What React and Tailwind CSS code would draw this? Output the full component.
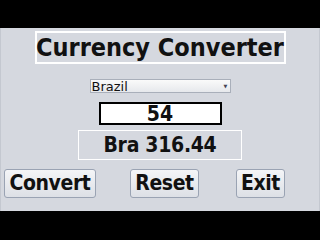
import { useState } from 'react'

const font = { fontFamily: '"DejaVu Sans Condensed", Tahoma, "DejaVu Sans", sans-serif' }

function Btn({ children, className, onClick }) {
  return (
    <button onClick={onClick}
      className={`h-[29px] rounded-[3px] border border-[#9aa3b3] bg-gradient-to-b from-[#f4f5f7] to-[#dde0e6] text-[21px] font-bold leading-none tracking-[-0.4px] text-[#111] whitespace-nowrap flex items-center justify-center ${className}`}>
      {children}
    </button>
  )
}

export default function App() {
  const [amount, setAmount] = useState('54')
  const [result, setResult] = useState('Bra 316.44')

  return (
    <div className="w-[320px] h-[240px] bg-black pt-[28px] overflow-hidden" style={font}>
      <div className="h-[183px] bg-[#d5d8df] flex flex-col items-center border-x border-[#c4c8d0]">
        <div className="mt-[3px] w-[251px] h-[33px] border-2 border-white flex items-center justify-center text-[25px] font-bold text-[#111] leading-none whitespace-nowrap">
          Currency Converter
        </div>
        <div className="mt-[15px] w-[141px] h-[14px] border border-[#a9afba] bg-gradient-to-b from-[#fafafa] to-[#e6e8ec] flex items-center text-[13px] leading-none text-[#111] font-['DejaVu_Sans',sans-serif]">
          <span className="flex-1 pl-[1px]">Brazil</span>
          <span className="w-[8px] h-full flex items-center justify-center text-[5px] text-[#445]">▼</span>
        </div>
        <input value={amount} onChange={e => setAmount(e.target.value)}
          className="mt-[9px] w-[123px] h-[23px] border-2 border-black bg-white text-center text-[21px] font-bold leading-none text-[#111] outline-none" />
        <div className="mt-[5px] w-[164px] h-[30px] border border-white flex items-center justify-center text-[21px] font-bold leading-none tracking-[-0.3px] text-[#111] whitespace-nowrap">
          {result}
        </div>
        <div className="mt-[9px] w-full flex pl-[3px]">
          <Btn className="w-[92px]">Convert</Btn>
          <Btn className="w-[69px] ml-[34px]" onClick={() => { setAmount(''); setResult('') }}>Reset</Btn>
          <Btn className="w-[49px] ml-[37px]">Exit</Btn>
        </div>
      </div>
    </div>
  )
}
